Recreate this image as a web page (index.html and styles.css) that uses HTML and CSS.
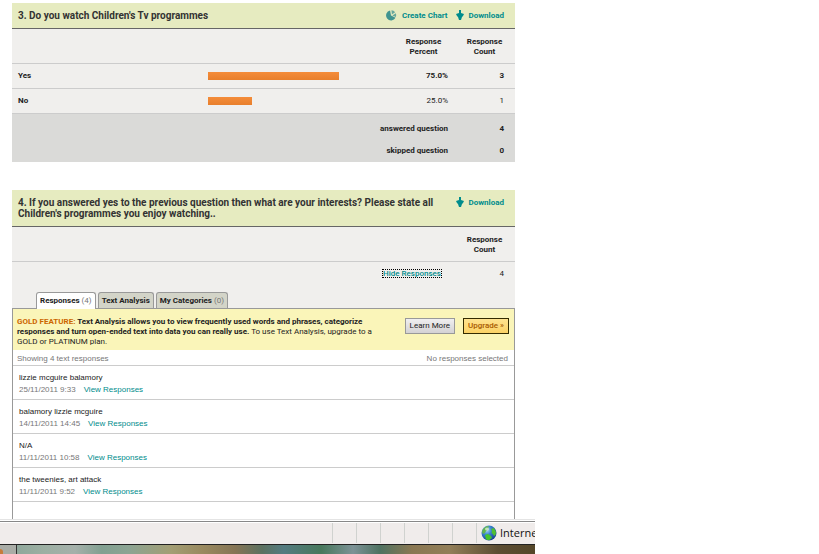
FILE: index.html
```html
<!DOCTYPE html>
<html lang="en">
<head>
<meta charset="utf-8">
<title>Survey responses</title>
<link rel="stylesheet" href="styles.css">
</head>
<body>
<div class="window">
  <main class="page">
    <section class="question">
      <header class="question-head">
        <h2 class="question-title">3. Do you watch Children's Tv programmes</h2>
        <nav class="actions">
          <a class="action" href="#chart"><svg class="icon-chart" viewBox="0 0 12 12" aria-hidden="true"><path class="pie" d="M5 0.500A5.500 5.500 0 1 0 11 8.500L6 6Z"/><path class="slice" d="M6.500 0.300A5.500 5.500 0 0 1 10.500 2.500L7 5Z"/><path class="slice" d="M11.300 3.500A5.500 5.500 0 0 1 11.300 7.500L7.500 6Z"/></svg>Create Chart</a>
          <a class="action" href="#download-3"><svg class="icon-down" viewBox="0 0 8 11" aria-hidden="true"><path d="M3 0H5V3L8 4L7 6L6 7L5 10H3L2 7L1 6L0 4L3 3Z"/></svg>Download</a>
        </nav>
      </header>
      <table class="results">
        <colgroup><col class="col-label"><col><col class="col-number"><col class="col-number"></colgroup>
        <thead>
          <tr><th></th><th></th><th scope="col">Response<br>Percent</th><th scope="col">Response<br>Count</th></tr>
        </thead>
        <tbody>
          <tr class="top-answer"><th scope="row">Yes</th><td class="bar-cell"><div class="bar" style="width:75%"></div></td><td>75.0%</td><td class="count">3</td></tr>
          <tr><th scope="row">No</th><td class="bar-cell"><div class="bar" style="width:25%"></div></td><td>25.0%</td><td class="count">1</td></tr>
        </tbody>
        <tfoot>
          <tr class="answered"><th colspan="3" scope="row">answered question</th><td class="count">4</td></tr>
          <tr class="skipped"><th colspan="3" scope="row">skipped question</th><td class="count">0</td></tr>
        </tfoot>
      </table>
    </section>

    <section class="question question-open">
      <header class="question-head">
        <h2 class="question-title">4. If you answered yes to the previous question then what are your interests? Please state all Children's programmes you enjoy watching..</h2>
        <nav class="actions">
          <a class="action" href="#download-4"><svg class="icon-down" viewBox="0 0 8 11" aria-hidden="true"><path d="M3 0H5V3L8 4L7 6L6 7L5 10H3L2 7L1 6L0 4L3 3Z"/></svg>Download</a>
        </nav>
      </header>
      <table class="results">
        <colgroup><col><col class="col-number"></colgroup>
        <thead>
          <tr><th></th><th scope="col">Response<br>Count</th></tr>
        </thead>
        <tbody>
          <tr class="toggle-row"><td><a class="toggle" href="#responses">Hide Responses</a></td><td class="count">4</td></tr>
        </tbody>
      </table>
      <div class="tabs" role="tablist">
        <button class="tab tab-active" role="tab" aria-selected="true">Responses <span>(4)</span></button>
        <button class="tab" role="tab">Text Analysis</button>
        <button class="tab" role="tab">My Categories <span>(0)</span></button>
      </div>
      <div class="panel" id="responses">
        <div class="promo">
          <p class="promo-text"><strong><em>GOLD FEATURE:</em> Text Analysis allows you to view frequently used words and phrases, categorize responses and turn open-ended text into data you can really use.</strong> To use Text Analysis, upgrade to a GOLD or PLATINUM plan.</p>
          <div class="promo-buttons">
            <button class="button">Learn More</button>
            <button class="button button-gold">Upgrade »</button>
          </div>
        </div>
        <div class="summary"><span>Showing 4 text responses</span><span>No responses selected</span></div>
        <ul class="responses">
          <li><p>lizzie mcguire balamory</p><div class="meta"><time>25/11/2011 9:33</time><a href="#r1">View Responses</a></div></li>
          <li><p>balamory lizzie mcguire</p><div class="meta"><time>14/11/2011 14:45</time><a href="#r2">View Responses</a></div></li>
          <li><p>N/A</p><div class="meta"><time>11/11/2011 10:58</time><a href="#r3">View Responses</a></div></li>
          <li><p>the tweenies, art attack</p><div class="meta"><time>11/11/2011 9:52</time><a href="#r4">View Responses</a></div></li>
        </ul>
      </div>
    </section>
  </main>
  <footer class="status">
    <i></i><i></i><i></i><i></i><i></i><i></i>
    <div class="zone">
      <svg class="globe" viewBox="0 0 16 16" aria-hidden="true">
        <defs><radialGradient id="sea" cx=".35" cy=".3" r=".75"><stop offset="0" stop-color="#b5dcf5"/><stop offset=".4" stop-color="#3b86d0"/><stop offset="1" stop-color="#173e92"/></radialGradient></defs>
        <circle cx="8" cy="8" r="7.500" fill="url(#sea)"/>
        <path d="M2 4L5 1.500L8 1L7 3L8 4L5 6L4 8L2 9L1 7Z" fill="#63b54a"/>
        <path d="M10 4L13 3L15 7L14.500 10L13 11L12 9L10.500 8L11 6Z" fill="#4fc032"/>
        <path d="M4 10L7 9L10 11L11 13L8 15.300L5 14.500Z" fill="#45c52c"/>
        <ellipse cx="6" cy="4" rx="2" ry="1.500" fill="#e8f5ee" opacity=".7"/>
      </svg>
      <span>Interne</span>
    </div>
  </footer>
  <div class="desktop"><div class="taskbar"><span></span></div></div>
</div>
</body>
</html>
```
FILE: styles.css
```css
* { box-sizing: border-box; }
body {
  margin: 0;
  display: grid;
  grid-template-columns: 535fr 284fr;
  background: #fff;
  color: #222;
  font: 8px/10px Roboto, "Liberation Sans", sans-serif;
}
h2, p, ul { margin: 0; padding: 0; }
a { color: #008c8c; text-decoration: none; }
button { font: inherit; color: inherit; margin: 0; white-space: nowrap; }
.window { min-width: 0; overflow: hidden; }
.page { padding: 3px 20px 0 12px; }

.question { background: #f0efed; }
.question-open { margin-top: 28px; }
.question-head {
  display: flex;
  justify-content: space-between;
  align-items: flex-start;
  padding: 7px 11px 7px 6px;
  background: #e6ebc0;
  border-bottom: 1px solid #666;
}
.question-title { color: #333; font-size: 10px; line-height: 11px; font-weight: 700; }
.actions { display: flex; gap: 8px; flex: none; padding-left: 8px; }
.action { display: flex; align-items: center; gap: 5px; line-height: 11px; font-weight: 700; }
.icon-chart { width: 12px; height: 11px; }
.icon-down { width: 8px; height: 11px; fill: #008c8c; }
.pie { fill: #3f9490; }
.slice { fill: #66a79c; }

.results { width: 100%; border-collapse: collapse; table-layout: fixed; }
.results th, .results td { padding: 0; }
.col-label { width: 38%; }
.col-number { width: 61px; }
.results thead th { height: 34px; padding-top: 2px; border-bottom: 1px solid #ccc; }
.results tbody th, .results tbody td { height: 25px; border-bottom: 1px solid #ccc; }
.results tbody th { padding-left: 6px; text-align: left; }
.results tbody td { padding-right: 6px; text-align: right; }
.results .top-answer td { font-weight: 700; }
.results td.count { padding-right: 11px; text-align: right; }
.results tbody .bar-cell { padding: 0 11px 0 5px; }
.bar { height: 8px; background: linear-gradient(#f48c3a, #e87f2c); }
.results tfoot { background: #dadad8; }
.results tfoot th { padding-right: 6px; text-align: right; }
.results tfoot td { font-weight: 700; }
.results .answered > * { height: 27px; padding-top: 5px; }
.results .skipped > * { height: 22px; padding-bottom: 1px; }
.results .toggle-row td { height: 25px; border: 0; }
.results .toggle-row td:first-child { padding-right: 12px; }
.toggle {
  display: inline-block;
  height: 9px;
  line-height: 8px;
  border: 1px dotted #000;
  font-weight: 500;
}

.tabs { display: flex; gap: 2px; padding: 6px 24px 0; }
.tab {
  height: 16px;
  padding: 0 3px;
  line-height: 16px;
  font-weight: 700;
  background: #d3d4c8;
  border: 1px solid #999;
  border-bottom: 0;
  border-radius: 3px 3px 0 0;
}
.tab span { font-weight: 400; color: #777; }
.tab-active { position: relative; margin-bottom: -1px; height: 17px; background: #fff; }

.panel {
  background: #fff;
  border: 1px solid #999;
  border-bottom: 0;
  padding-bottom: 17px;
}
.promo {
  display: flex;
  justify-content: space-between;
  align-items: flex-start;
  padding: 8px 5px 3px 4px;
  background: #faf5b9;
}
.promo-text { flex: 0 1 360px; }
.promo-text em { font-style: normal; color: #cc6600; }
.promo-buttons { display: flex; gap: 8px; flex: none; padding-top: 1px; }
.button {
  height: 16px;
  padding: 0 4px;
  line-height: 14px;
  border: 1px solid #999;
  background: linear-gradient(#f0eff0, #d4d2d4);
}
.button-gold { border-color: #332b00; color: #a85a00; font-weight: 500; background: linear-gradient(#ffe38f, #fbd266); }
.summary, .responses { font-family: "Liberation Sans", Arial, sans-serif; }
.summary {
  display: flex;
  justify-content: space-between;
  padding: 4px 6px 1px 4px;
  color: #777;
  border-bottom: 1px solid #ccc;
}
.responses { list-style: none; }
.responses li { padding: 6px 6px 3px; border-bottom: 1px solid #ccc; }
.responses li p { line-height: 12px; }
.meta { display: flex; gap: 8px; line-height: 12px; color: #777; }

.status {
  display: flex;
  justify-content: flex-end;
  height: 26px;
  padding: 1px 0 1px;
  background: #f0eceb;
  border: solid #222;
  border-width: 0 0 1px;
  box-shadow: inset 0 1px #e4e4e4, inset 0 2px #fff, inset 0 3px #888, inset 0 4px #fff;
}
.status i, .zone { margin-top: 3px; border-left: 1px solid #d0d2cf; }
.status i { width: 24px; }
.zone {
  display: flex;
  align-items: center;
  gap: 3px;
  width: 59px;
  padding-left: 4px;
  overflow: hidden;
  color: #111;
  font: 11px/20px "Open Sans", "Noto Sans", sans-serif;
}
.globe { flex: none; width: 16px; height: 16px; }
.desktop {
  height: 9px;
  background: linear-gradient(90deg, #8fa79b 3%, #9cafa2 8%, #a5b0aa 14%, #82a091 19%, #8ca493 24%, #a39e74 32%, #99895f 38%, #857455 44%, #5c7160 49%, #547b80 53%, #48785c 60%, #7d9296 66%, #4f7261 71%, #8a7752 77%, #927e58 84%, #5c4d33 93%, #544629);
}
.taskbar { width: 17px; height: 9px; border-right: 1px solid #333; background: #a9aca6; overflow: hidden; }
.taskbar span { display: block; width: 3px; height: 5px; margin-top: 4px; background: #c87c3c; border-radius: 0 3px 0 0; }
```
